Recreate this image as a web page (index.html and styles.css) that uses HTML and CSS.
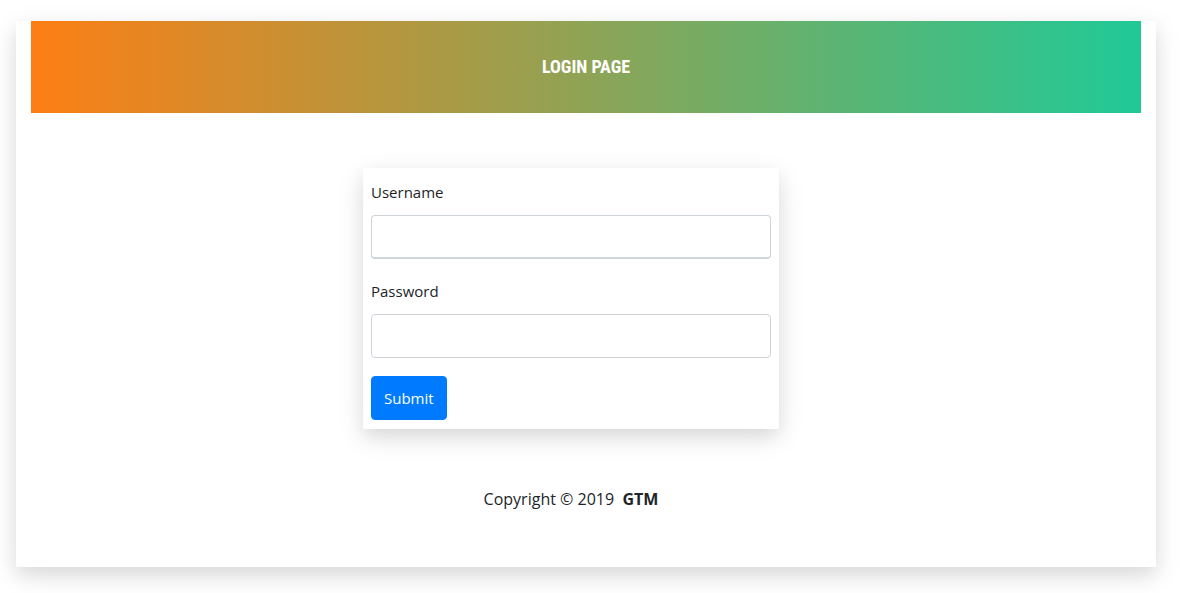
FILE: index.html
```html
<!DOCTYPE html>
<html lang="en">
<head>
<meta charset="utf-8">
<meta name="viewport" content="width=device-width, initial-scale=1">
<title>Login Page</title>
<link rel="stylesheet" href="styles.css">
</head>
<body>
<div class="page">
  <header class="banner"><h1 class="banner-title">LOGIN PAGE</h1></header>
  <main class="content">
    <form class="login">
      <label class="label" for="username">Username</label>
      <input class="field field-active" id="username" type="text">
      <label class="label" for="password">Password</label>
      <input class="field" id="password" type="password">
      <button class="submit" type="submit">Submit</button>
    </form>
  </main>
  <footer class="footer">Copyright © 2019 &nbsp;<strong>GTM</strong></footer>
</div>
</body>
</html>
```
FILE: styles.css
```css
* { box-sizing: border-box; }
body {
  margin: 0;
  padding: 21px 24px 26px 16px;
  background: #fff;
  color: #212529;
  font: 16px/24px "Open Sans", "Noto Sans", sans-serif;
}
.page {
  padding: 0 15px 56px;
  background: #fff;
  box-shadow: 0 8px 16px rgba(0, 0, 0, .08), 0 8px 28px rgba(0, 0, 0, .09);
}
.banner {
  padding: 32px 16px;
  background: linear-gradient(to right, #fd7e14, #20c997);
  color: #fff;
  text-align: center;
}
.banner-title {
  margin: 0;
  font: bold 18px/28px "Liberation Sans Narrow", "Roboto Condensed", "Liberation Sans", sans-serif;
}
.content {
  display: flex;
  justify-content: center;
  padding: 55px 30px 58px 0;
}
.login {
  display: flex;
  flex-direction: column;
  align-items: flex-start;
  width: 100%;
  max-width: 416px;
  padding: 12px 8px 9px;
  background: #fff;
  box-shadow: 0 8px 16px rgba(0, 0, 0, .08), 0 8px 28px rgba(0, 0, 0, .09);
}
.label {
  margin-bottom: 11px;
  font-size: 15px;
}
.field {
  width: 100%;
  height: 44px;
  margin-bottom: 20px;
  padding: 6px 12px;
  border: 1px solid #ced4da;
  border-radius: 4px;
  background: #fff;
  color: #495057;
  font: inherit;
}
.field-active { border-bottom-width: 2px; }
.submit {
  margin-top: -2px;
  padding: 9px 12px;
  border: 1px solid #007bff;
  border-radius: 4px;
  background: #007bff;
  color: #fff;
  font: inherit;
  font-size: 15px;
}
.footer {
  padding-right: 30px;
  text-align: center;
}
```
